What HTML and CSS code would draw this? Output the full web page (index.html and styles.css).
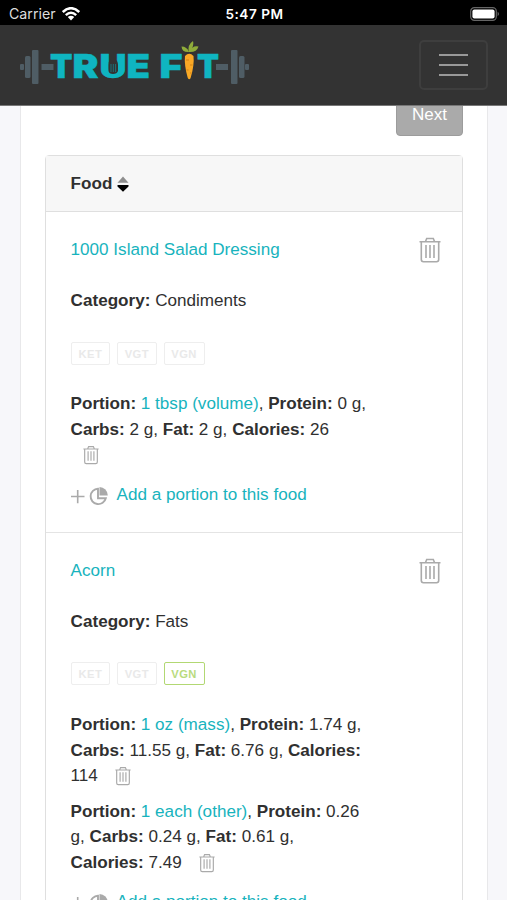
FILE: index.html
```html
<!DOCTYPE html>
<html lang="en">
<head>
<meta charset="utf-8">
<title>True Fit</title>
<link rel="stylesheet" href="styles.css">
</head>
<body>
<svg class="defs" aria-hidden="true">
  <symbol id="trash" viewBox="0 0 22 26">
    <path d="M0.5 4.8H21.5M6.5 4.5L7.7 1.5H14.3L15.5 4.5M2.3 5V22.6Q2.3 24.8 4.5 24.8H17.5Q19.7 24.8 19.7 22.6V5" fill="none" stroke="currentColor" stroke-width="1.6"/>
    <path d="M7 8V21M11 8V21M15 8V21" fill="none" stroke="currentColor" stroke-width="1.6"/>
  </symbol>
  <symbol id="portion" viewBox="0 0 38 20">
    <path d="M0 10.5H13.5M6.7 4V17.2" fill="none" stroke="currentColor" stroke-width="1.6"/>
    <path d="M27 2.7A7.7 7.7 0 1 0 34.8 12.2H27Z" fill="none" stroke="currentColor" stroke-width="1.9"/>
    <path d="M28.5 1A8.5 8.5 0 0 1 36.8 9.5H28.5Z" fill="currentColor"/>
  </symbol>
</svg>
<div class="status">
  <div class="carrier">Carrier
    <svg width="18" height="14" viewBox="0 0 18 14"><g fill="none" stroke="#fff" stroke-width="2.5"><path d="M0.8 5Q9 -2.6 17.2 5"/><path d="M3.8 8.1Q9 3.4 14.2 8.1"/></g><path d="M5.8 10.1Q9 7.4 12.2 10.1L9 13.4Z" fill="#fff"/></svg>
  </div>
  <div class="clock">5:47 PM</div>
  <svg class="battery" width="30" height="14" viewBox="0 0 30 14"><rect x="0.7" y="0.7" width="25.6" height="12.6" rx="3.6" fill="none" stroke="#666" stroke-width="1.2"/><rect x="2.4" y="2.4" width="22.2" height="9.2" rx="2" fill="#fff"/><path d="M27.7 4.8Q30 7 27.7 9.2Z" fill="#777"/></svg>
</div>
<nav class="navbar">
  <svg class="logo" width="230" height="46" viewBox="0 0 230 46">
    <g fill="#4f5d65">
      <rect x="0" y="23" width="4" height="6" rx="1"/><rect x="5" y="15" width="5.5" height="22" rx="1.5"/><rect x="12" y="9" width="6.5" height="34" rx="1"/><rect x="21.5" y="23" width="12" height="6"/>
      <rect x="196" y="23" width="12" height="6"/><rect x="211" y="9" width="6.5" height="34" rx="1"/><rect x="219" y="15" width="5.5" height="22" rx="1.5"/><rect x="225" y="23" width="4" height="6" rx="1"/>
    </g>
    <g class="logo-text">
      <text y="36.5" x="30" textLength="22.5" lengthAdjust="spacingAndGlyphs">T</text>
      <text y="36.5" x="52.5" textLength="26" lengthAdjust="spacingAndGlyphs">R</text>
      <text y="36.5" x="79.5" textLength="27" lengthAdjust="spacingAndGlyphs">U</text>
      <text y="36.5" x="106.5" textLength="23.5" lengthAdjust="spacingAndGlyphs">E</text>
      <text y="36.5" x="139.5" textLength="23" lengthAdjust="spacingAndGlyphs">F</text>
      <text y="36.5" x="177" textLength="22" lengthAdjust="spacingAndGlyphs">T</text>
    </g>
    <path d="M91 12H95V18Q98 20 98 24V30Q97 33 93 33Q89 33 88.500 30V24Q88.500 20 91 18Z" fill="#333"/>
    <path d="M91 23v8M93.3 23v8M95.600 23v8" stroke="#17838c" stroke-width=".8" fill="none"/>
    <path d="M165 15Q169.2 10.5 173.5 15Q174.5 24 170.6 37Q169.2 39.5 167.8 37Q164 24 165 15Z" fill="#f9a825"/>
    <path d="M166 19h3M170 24h2.5M166.5 29h2M170 32h1.5" stroke="#d78212" fill="none"/>
    <path d="M169 11Q162 11.5 161.5 5.5Q167 5.500 169 11ZM169 11Q167 4 173 0Q174.500 4 170 11ZM170 11Q172 4 178.500 5.5Q177 11 170 11Z" fill="#8fac3a"/>
  </svg>
  <button class="toggler" aria-label="Menu"><span class="bar"></span><span class="bar"></span><span class="bar"></span></button>
</nav>
<main class="page">
  <section class="panel">
    <div class="pager"><button class="next">Next</button></div>
    <div class="table">
      <header class="head">Food
        <svg width="12" height="16" viewBox="0 0 12 16"><path d="M0.5 6.7L6 0.5L11.5 6.7Z" fill="#8d8d8d"/><path d="M0.5 9H11.5V10.5L6 15.7L0.5 10.5Z" fill="#000"/></svg>
      </header>
      <article class="food">
        <div class="title"><a>1000 Island Salad Dressing</a><svg class="delete"><use href="#trash"/></svg></div>
        <p class="category"><b>Category:</b> Condiments</p>
        <div class="tags"><span class="tag">KET</span><span class="tag">VGT</span><span class="tag vgn">VGN</span></div>
        <p class="portion"><b>Portion:</b> <a>1 tbsp (volume)</a>, <b>Protein:</b> 0 g,<br><b>Carbs:</b> 2 g, <b>Fat:</b> 2 g, <b>Calories:</b> 26<br><svg class="remove first"><use href="#trash"/></svg></p>
        <div class="add"><svg class="add-icon"><use href="#portion"/></svg><a>Add a portion to this food</a></div>
      </article>
      <article class="food">
        <div class="title"><a>Acorn</a><svg class="delete"><use href="#trash"/></svg></div>
        <p class="category"><b>Category:</b> Fats</p>
        <div class="tags"><span class="tag">KET</span><span class="tag">VGT</span><span class="tag vgn on">VGN</span></div>
        <p class="portion"><b>Portion:</b> <a>1 oz (mass)</a>, <b>Protein:</b> 1.74 g,<br><b>Carbs:</b> 11.55 g, <b>Fat:</b> 6.76 g, <b>Calories:</b><br>114<svg class="remove"><use href="#trash"/></svg></p>
        <p class="portion"><b>Portion:</b> <a>1 each (other)</a>, <b>Protein:</b> 0.26<br>g, <b>Carbs:</b> 0.24 g, <b>Fat:</b> 0.61 g,<br><b>Calories:</b> 7.49<svg class="remove"><use href="#trash"/></svg></p>
        <div class="add"><svg class="add-icon"><use href="#portion"/></svg><a>Add a portion to this food</a></div>
      </article>
    </div>
  </section>
</main>
</body>
</html>
```
FILE: styles.css
```css
* { box-sizing: border-box; }
body {
  margin: 0;
  height: 900px;
  overflow: hidden;
  display: flex;
  flex-direction: column;
  background: #f7f7fa;
  color: #303030;
  font: 17.1px/25.65px "Liberation Sans", Arial, sans-serif;
}
.defs { display: none; }
p { margin: 0; }
a { color: #17b3bd; }

.status {
  flex: none;
  height: 25px;
  display: grid;
  grid-template-columns: 1fr auto 1fr;
  align-items: center;
  padding: 2px 7px 0 9px;
  background: #000;
  color: #fff;
  font: 14.2px/20px Inter, sans-serif;
}
.carrier { display: flex; align-items: center; gap: 6px; color: #ddd; }
.clock { font-weight: 600; font-size: 13.6px; letter-spacing: .5px; }
.battery { justify-self: end; }

.navbar {
  flex: none;
  height: 81px;
  display: flex;
  align-items: center;
  justify-content: space-between;
  padding: 0 19px 0 20px;
  background: #333;
  border-bottom: 1px solid #777;
}
.logo { margin-top: -2px; }
.logo-text { font: 900 33px Inter, sans-serif; fill: #0fb5c1; stroke: #0fb5c1; stroke-width: .5px; }
.toggler {
  width: 69px;
  height: 50px;
  display: flex;
  flex-direction: column;
  align-items: center;
  justify-content: center;
  gap: 8px;
  padding: 0;
  background: none;
  border: 2px solid #3e3e3e;
  border-radius: 5px;
}
.bar { width: 29px; height: 2px; background: #999; }

.page { flex: 1; min-height: 0; overflow: hidden; padding: 0 19px 0 20px; }
.panel {
  background: #fff;
  border: solid #e8e8ea;
  border-width: 0 1px;
  padding: 0 24px;
}
.pager { display: flex; justify-content: flex-end; height: 49px; align-items: flex-start; }
.next {
  width: 67px;
  height: 44px;
  margin-top: -14px;
  padding: 1px 0 0;
  background: #aaa;
  border: 1px solid #9c9c9c;
  border-radius: 4px;
  color: #fff;
  font: inherit;
}
.table { border: 1px solid #dfdfdf; border-radius: 4px; }
.head {
  height: 56px;
  display: flex;
  align-items: center;
  gap: 5px;
  padding: 1px 24.6px 0;
  background: #f7f7f7;
  border-bottom: 1px solid #dfdfdf;
  font-weight: bold;
}
.food { padding: 25.4px 21px 24.3px 24.6px; border-bottom: 1px solid #e4e4e4; }
.title { display: flex; justify-content: space-between; height: 26px; }
.delete { width: 22px; height: 26px; color: #aaa; }
.category { margin: 25px 0; }
.tags { display: flex; gap: 7px; height: 26px; align-items: center; margin: 26px 0 25px; }
.tag {
  width: 39.5px;
  height: 23px;
  border: 1px solid #eee;
  border-radius: 2px;
  color: #e9e9e9;
  font-size: 11.2px;
  font-weight: bold;
  line-height: 22px;
  letter-spacing: .4px;
  text-align: center;
}
.vgn { width: 41px; }
.on { color: #b9db7e; border-color: #b2d873; }
.portion { margin-bottom: 10px; height: 76.8px; }
.remove { width: 16px; height: 20px; margin-left: 17px; vertical-align: -5px; color: #aaa; }
.first { margin-left: 12px; }
.add { display: flex; align-items: center; gap: 8px; margin-top: 14px; }
.add-icon { width: 38px; height: 20px; color: #aaa; margin-top: 2px; }
```
